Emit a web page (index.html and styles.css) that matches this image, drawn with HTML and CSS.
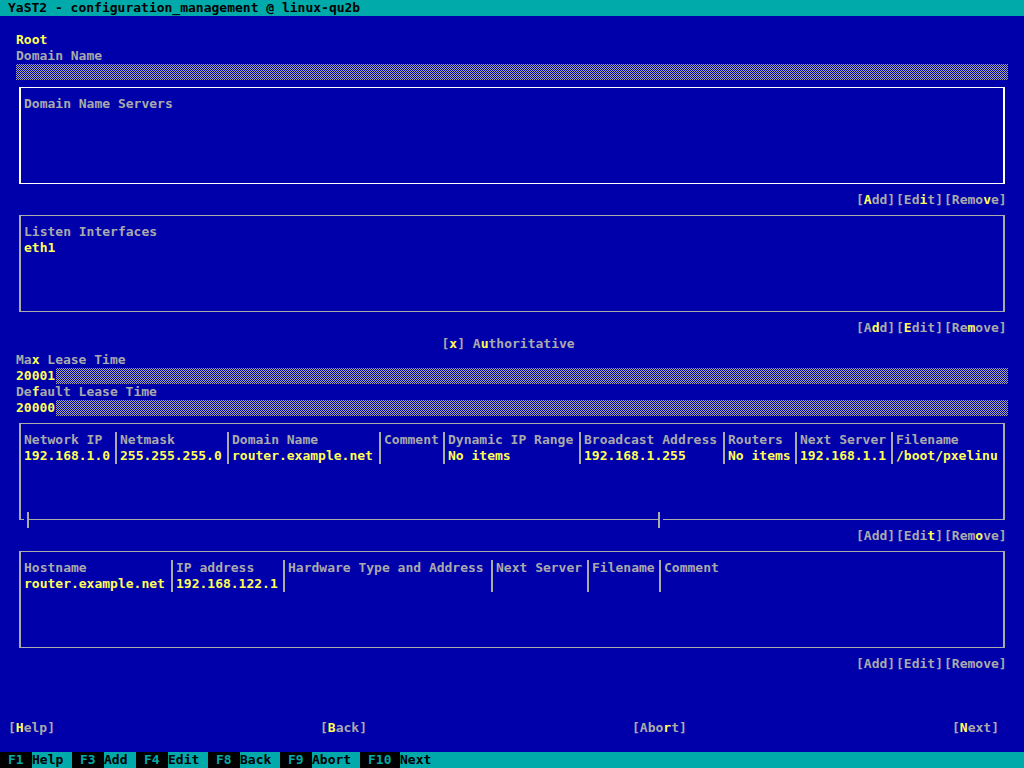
FILE: index.html
```html
<!DOCTYPE html>
<html lang="en">
<head>
<meta charset="utf-8">
<title>YaST2 - configuration_management @ linux-qu2b</title>
<link rel="stylesheet" href="styles.css">
</head>
<body class="screen">
<header class="titlebar">YaST2 - configuration_management @ linux-qu2b</header>
<main class="content">
  <h1 class="heading">Root</h1>

  <label class="label" for="domain">Domain Name</label>
  <input class="field" id="domain" type="text">

  <section class="box box-focus">
    <table class="grid">
      <thead><tr><th>Domain Name Servers</th></tr></thead>
    </table>
  </section>
  <div class="actions">
    <button class="btn w5" type="button">[<b>A</b>dd]</button><button class="btn w6" type="button">[Ed<b>i</b>t]</button><button class="btn w8" type="button">[Remo<b>v</b>e]</button>
  </div>

  <section class="box">
    <table class="grid">
      <thead><tr><th>Listen Interfaces</th></tr></thead>
      <tbody><tr><td>eth1</td></tr></tbody>
    </table>
  </section>
  <div class="actions">
    <button class="btn w5" type="button">[A<b>d</b>d]</button><button class="btn w6" type="button">[<b>E</b>dit]</button><button class="btn w8" type="button">[Re<b>m</b>ove]</button>
  </div>

  <div class="check-row">
    <label class="check" for="auth">[<input class="tick" id="auth" type="checkbox" checked>] A<b>u</b>thoritative</label>
  </div>

  <label class="label" for="max">Ma<b>x</b> Lease Time</label>
  <input class="field field-filled" id="max" type="text" value="20001">
  <label class="label" for="default">De<b>f</b>ault Lease Time</label>
  <input class="field field-filled" id="default" type="text" value="20000">

  <section class="box box-scroll">
    <table class="grid">
      <thead><tr><th class="w12">Network IP</th><th class="w14">Netmask</th><th class="w19">Domain Name</th><th class="w8">Comment</th><th class="w17">Dynamic IP Range</th><th class="w18">Broadcast Address</th><th class="w9">Routers</th><th class="w12">Next Server</th><th>Filename</th></tr></thead>
      <tbody><tr><td>192.168.1.0</td><td>255.255.255.0</td><td>router.example.net</td><td></td><td>No items</td><td>192.168.1.255</td><td>No items</td><td>192.168.1.1</td><td>/boot/pxelinu</td></tr></tbody>
    </table>
  </section>
  <div class="scrollbar">
    <span class="rule rule-start"></span>
    <span class="stop"></span>
    <span class="rule rule-thumb"></span>
    <span class="stop"></span>
    <span class="rule rule-end"></span>
  </div>
  <div class="actions actions-tight">
    <button class="btn w5" type="button">[Add]</button><button class="btn w6" type="button">[Edi<b>t</b>]</button><button class="btn w8" type="button">[Rem<b>o</b>ve]</button>
  </div>

  <section class="box">
    <table class="grid">
      <thead><tr><th class="w19">Hostname</th><th class="w14">IP address</th><th class="w26">Hardware Type and Address</th><th class="w12">Next Server</th><th class="w9">Filename</th><th>Comment</th></tr></thead>
      <tbody><tr><td>router.example.net</td><td>192.168.122.1</td><td></td><td></td><td></td><td></td></tr></tbody>
    </table>
  </section>
  <div class="actions">
    <button class="btn w5" type="button">[Add]</button><button class="btn w6" type="button">[Edit]</button><button class="btn w8" type="button">[Remove]</button>
  </div>
</main>

<nav class="wizard">
  <button class="btn w6" type="button">[<b>H</b>elp]</button>
  <button class="btn w6" type="button">[<b>B</b>ack]</button>
  <button class="btn w7" type="button">[Abo<b>r</b>t]</button>
  <button class="btn w6" type="button">[<b>N</b>ext]</button>
</nav>

<footer class="keys">
  <button class="key" type="button"><span class="cap w4">F1</span><span class="w5">Help</span></button>
  <button class="key" type="button"><span class="cap w4">F3</span><span class="w4">Add</span></button>
  <button class="key" type="button"><span class="cap w4">F4</span><span class="w5">Edit</span></button>
  <button class="key" type="button"><span class="cap w4">F8</span><span class="w5">Back</span></button>
  <button class="key" type="button"><span class="cap w4">F9</span><span class="w6">Abort</span></button>
  <button class="key" type="button"><span class="cap w5">F10</span><span class="w5">Next</span></button>
</footer>
</body>
</html>
```

FILE: styles.css
```css
:root {
  --blue: #0000aa;
  --teal: #00aaaa;
  --grey: #aaaaaa;
  --yellow: #ffff55;
  --cell: 8px;
}

* {
  box-sizing: border-box;
}

.screen {
  display: flex;
  flex-direction: column;
  min-height: 100vh;
  margin: 0;
  background: var(--blue);
  color: var(--grey);
  font: bold 13px/16px "DejaVu Sans Mono", "Liberation Mono", monospace;
}

.screen b {
  color: var(--yellow);
  font-weight: inherit;
}

/* Widths counted in terminal cells */
.w4 { min-width: calc(4 * var(--cell)); }
.w5 { min-width: calc(5 * var(--cell)); }
.w6 { min-width: calc(6 * var(--cell)); }
.w7 { min-width: calc(7 * var(--cell)); }
.w8 { min-width: calc(8 * var(--cell)); }
.w9 { min-width: calc(9 * var(--cell)); }
.w12 { min-width: calc(12 * var(--cell)); }
.w14 { min-width: calc(14 * var(--cell)); }
.w17 { min-width: calc(17 * var(--cell)); }
.w18 { min-width: calc(18 * var(--cell)); }
.w19 { min-width: calc(19 * var(--cell)); }
.w26 { min-width: calc(26 * var(--cell)); }

.titlebar {
  padding: 0 8px;
  background: var(--teal);
  color: #000;
}

.content {
  display: flex;
  flex-direction: column;
  padding: 16px 16px 0;
}

.heading {
  margin: 0;
  color: var(--yellow);
  font: inherit;
}

.label {
  align-self: flex-start;
}

.field {
  width: 100%;
  height: 16px;
  padding: 0;
  border: 0;
  outline: 0;
  background: conic-gradient(var(--grey) 25%, var(--blue) 0 50%, var(--grey) 0 75%, var(--blue) 0) 0 0 / 2px 2px;
  color: var(--yellow);
  font: inherit;
}

.field-filled {
  background:
    linear-gradient(var(--blue), var(--blue)) 0 0 / calc(5 * var(--cell)) 100% no-repeat,
    conic-gradient(var(--grey) 25%, var(--blue) 0 50%, var(--grey) 0 75%, var(--blue) 0) 0 0 / 2px 2px;
}

.box {
  min-height: 97px;
  margin: 7px 3px 0;
  padding-top: 8px;
  border: solid var(--grey);
  border-width: 1px 2px;
  overflow: hidden;
}

.box-focus {
  border-color: #fff;
}

.box-scroll {
  min-height: 89px;
  border-bottom: 0;
}

.grid {
  border-collapse: separate;
  border-spacing: 0;
  white-space: nowrap;
}

.grid th,
.grid td {
  height: 16px;
  padding: 0 3px;
  border-right: 2px solid var(--grey);
  font-weight: inherit;
  text-align: left;
}

.grid td {
  color: var(--yellow);
}

.grid th:last-child,
.grid td:last-child {
  border-right: 0;
}

.scrollbar {
  display: flex;
  height: 16px;
  margin: 0 3px;
}

.rule {
  height: 8px;
  border-bottom: 1px solid var(--grey);
}

.rule-start {
  width: 5px;
  margin-right: 3px;
  border-left: 2px solid var(--grey);
}

.rule-thumb {
  flex: 630;
}

.rule-end {
  flex: 340;
  margin-left: 3px;
  border-right: 2px solid var(--grey);
}

.stop {
  width: 2px;
  background: var(--grey);
}

.actions {
  display: flex;
  justify-content: flex-end;
  margin-top: 8px;
}

.actions-tight {
  margin-top: 0;
}

.btn,
.key {
  padding: 0;
  border: 0;
  background: none;
  color: inherit;
  font: inherit;
  text-align: left;
}

.check-row {
  display: flex;
  justify-content: center;
  padding-right: 8px;
}

.check {
  display: flex;
  white-space: pre;
}

.tick {
  appearance: none;
  width: 8px;
  height: 16px;
  margin: 0;
  color: var(--yellow);
  font: inherit;
}

.tick:checked::before {
  content: "x";
}

.wizard {
  display: flex;
  justify-content: space-between;
  margin-top: auto;
  padding: 16px 24px 16px 8px;
}

.keys {
  display: flex;
  background: var(--teal);
  color: #000;
}

.key {
  display: flex;
}

.cap {
  padding: 0 8px;
  background: #000;
  color: var(--teal);
}
```
